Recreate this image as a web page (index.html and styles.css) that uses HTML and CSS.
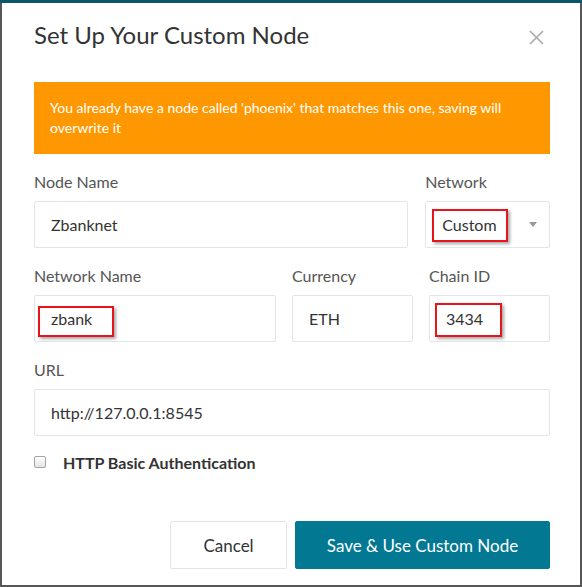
FILE: index.html
```html
<!DOCTYPE html>
<html>
<head>
<meta charset="utf-8">
<link rel="stylesheet" href="styles.css">
</head>
<body>
<div class="modal">
  <div class="header">
    <h1 class="title">Set Up Your Custom Node</h1>
    <button class="close" aria-label="Close">
      <svg width="15" height="15" viewBox="0 0 15 15"><path d="M1 1 L14 14 M14 1 L1 14" stroke="#a9a9a9" stroke-width="1.6" fill="none"/></svg>
    </button>
  </div>
  <div class="alert">You already have a node called 'phoenix' that matches this one, saving will overwrite it</div>

  <div class="row row-1">
    <div class="field">
      <label class="label">Node Name</label>
      <div class="input"><span>Zbanknet</span></div>
    </div>
    <div class="field">
      <label class="label">Network</label>
      <div class="input select">
        <span>Custom</span>
        <span class="caret"></span>
        <span class="mark mark-custom"></span>
      </div>
    </div>
  </div>

  <div class="row row-2">
    <div class="field">
      <label class="label">Network Name</label>
      <div class="input"><span>zbank</span><span class="mark mark-zbank"></span></div>
    </div>
    <div class="field">
      <label class="label">Currency</label>
      <div class="input"><span>ETH</span></div>
    </div>
    <div class="field">
      <label class="label">Chain ID</label>
      <div class="input"><span>3434</span><span class="mark mark-chain"></span></div>
    </div>
  </div>

  <div class="row row-3">
    <div class="field">
      <label class="label">URL</label>
      <div class="input"><span>http://127.0.0.1:8545</span></div>
    </div>
  </div>

  <label class="check">
    <span class="box"></span>
    <span class="check-text">HTTP Basic Authentication</span>
  </label>

  <div class="footer">
    <button class="btn btn-cancel">Cancel</button>
    <button class="btn btn-primary">Save &amp; Use Custom Node</button>
  </div>
</div>
</body>
</html>
```

FILE: styles.css
```css
* { box-sizing: border-box; }
html, body { margin: 0; height: 100%; }
body {
  background: linear-gradient(#0e566d 0, #0e566d 3px, #575757 3px);
  font-family: Lato, "Open Sans", sans-serif;
  color: #333;
  overflow: hidden;
}
.modal {
  margin: 3px 2px 0 2px;
  height: 582px;
  background: #fff;
  padding: 17px 30px 0 32px;
}
.header {
  display: flex;
  justify-content: space-between;
  align-items: flex-start;
}
.title {
  margin: 0;
  font-size: 24px;
  font-weight: 400;
  line-height: 29px;
  color: #333;
}
.close {
  border: 0;
  background: none;
  padding: 0;
  margin: 10px 6px 0 0;
  width: 15px;
  height: 15px;
  display: flex;
}
.alert {
  margin-top: 33px;
  background: #ff9800;
  color: #fff;
  font-size: 14px;
  line-height: 20px;
  padding: 16px 30px 16px 16px;
}
.row {
  display: grid;
  column-gap: 17px;
}
.row-1 { grid-template-columns: 3fr 1fr; margin-top: 18px; }
.row-2 { grid-template-columns: 2fr 1fr 1fr; column-gap: 16px; margin-top: 18px; }
.row-3 { grid-template-columns: 1fr; margin-top: 18px; }
.field { display: flex; flex-direction: column; }
.label {
  font-size: 16px;
  line-height: 19px;
  color: #555;
  margin-bottom: 10px;
}
.input {
  position: relative;
  height: 47px;
  border: 1px solid #e1e6eb;
  border-radius: 2px;
  display: flex;
  align-items: center;
  padding-left: 16px;
  font-size: 16px;
  color: #333;
}
.select { padding-right: 12px; }
.caret {
  margin-left: auto;
  width: 0; height: 0;
  border-left: 4.5px solid transparent;
  border-right: 4.5px solid transparent;
  border-top: 5px solid #999;
}
.mark {
  position: absolute;
  border: 2px solid #e8141b;
  box-shadow: 2px 2px 3px rgba(0,0,0,0.35);
}
.mark-custom { left: 6px; top: 7px; width: 76px; height: 33px; }
.mark-zbank { left: 3px; top: 10px; width: 76px; height: 31px; }
.mark-chain { left: 5px; top: 7px; width: 67px; height: 34px; }
.check {
  display: flex;
  align-items: center;
  margin: 19px 0 0 0;
  height: 14px;
}
.box {
  width: 12px; height: 12px;
  border: 1px solid #a5a5a5;
  border-radius: 2px;
  background: linear-gradient(#fdfdfd, #e4e4e4);
}
.check-text {
  margin-left: 17px;
  font-size: 16px;
  font-weight: 700;
  color: #333;
}
.footer {
  display: flex;
  justify-content: flex-end;
  gap: 8px;
  margin-top: 52px;
}
.btn {
  height: 48px;
  border-radius: 2px;
  font-family: Lato, "Open Sans", sans-serif;
  font-size: 17px;
  padding: 0;
}
.btn-cancel {
  width: 117px;
  background: #fff;
  border: 1px solid #e1e6eb;
  color: #333;
}
.btn-primary {
  width: 255px;
  background: #037893;
  border: 1px solid #037893;
  color: #fff;
}
```
